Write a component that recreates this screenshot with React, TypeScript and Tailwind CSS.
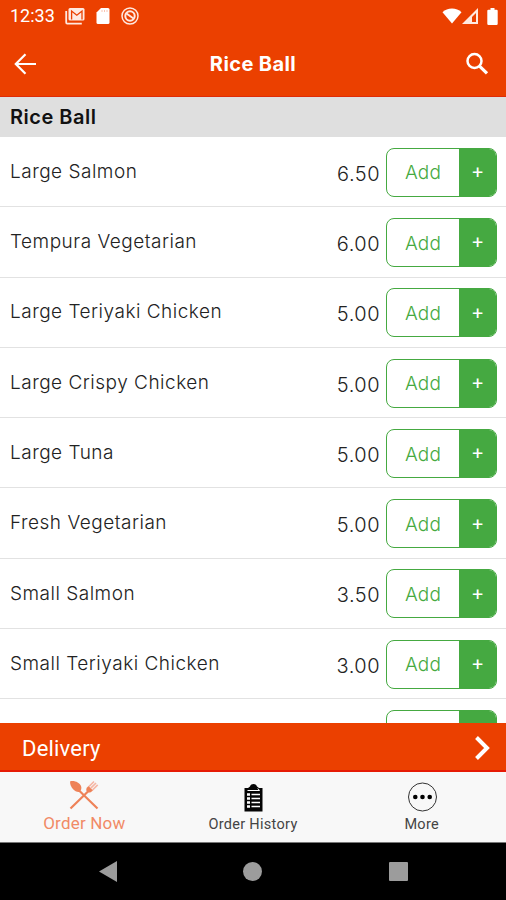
import type { ReactNode } from "react";

type MenuItem = {
  name: string;
  price: string;
};

const items: MenuItem[] = [
  { name: "Large Salmon", price: "6.50" },
  { name: "Tempura Vegetarian", price: "6.00" },
  { name: "Large Teriyaki Chicken", price: "5.00" },
  { name: "Large Crispy Chicken", price: "5.00" },
  { name: "Large Tuna", price: "5.00" },
  { name: "Fresh Vegetarian", price: "5.00" },
  { name: "Small Salmon", price: "3.50" },
  { name: "Small Teriyaki Chicken", price: "3.00" },
];

function StatusBar() {
  return (
    <div className="flex h-8 items-center justify-between pl-2.5 pr-2">
      <div className="flex items-center">
        <span className="w-[55px] font-['Roboto',sans-serif] text-[18px] leading-none">
          12:33
        </span>
        {/* Gmail stack */}
        <svg width="20" height="18" viewBox="0 0 20 18" fill="none">
          <path d="M1.2 4v11.6a1 1 0 0 0 1 1h14.6" stroke="#ffe9e0" strokeWidth="1.8" />
          <rect x="3.5" y="1" width="16" height="12.6" rx="1.5" fill="#ffe9e0" />
          <path d="M6.6 12.5V4l5.2 4.2L17 4v8.5" stroke="#eb4000" strokeWidth="1.3" />
        </svg>
        {/* SD card */}
        <svg width="14" height="16" viewBox="0 0 14 16" className="ml-[11px]">
          <path d="M5 0h7a1.5 1.5 0 0 1 1.5 1.5v13a1.5 1.5 0 0 1-1.5 1.5H2a1.5 1.5 0 0 1-1.5-1.5V4.5z" fill="#fff" />
          <path d="M6 2v2M8.5 2v2M11 2v2" stroke="#f9c4b2" />
        </svg>
        {/* Blocked circle */}
        <svg width="18" height="18" viewBox="0 0 18 18" fill="none" stroke="#ffe9e0" className="ml-[11px]">
          <circle cx="9" cy="9" r="8" strokeWidth="1.5" />
          <circle cx="9" cy="9" r="4.7" strokeWidth="2" />
          <path d="M5.5 6.5l7 5" strokeWidth="2" />
        </svg>
      </div>
      <div className="flex items-center">
        <svg width="20" height="16" viewBox="0 0 20 16" fill="#fff">
          <path d="M10 15.5L.5 4.2C3 1.8 6.3.5 10 .5s7 1.3 9.5 3.7z" />
        </svg>
        <svg width="17" height="16" viewBox="0 0 17 16">
          <path d="M16 0v16H0z" fill="#ffe9e0" />
          <path d="M14 5v9h-4V9z" fill="#eb4000" />
        </svg>
        <svg width="11" height="17" viewBox="0 0 11 17" fill="#fff" className="ml-2">
          <path d="M3.5 0h4v1.7h2A1.2 1.2 0 0 1 10.700 3v12.700a1.200 1.200 0 0 1-1.200 1.200h-8A1.200 1.200 0 0 1 .3 15.700V3a1.200 1.200 0 0 1 1.200-1.300h2z" />
        </svg>
      </div>
    </div>
  );
}

function Header() {
  return (
    <header className="h-[97px] shrink-0 border-b border-[#df2b08] bg-[#eb4000] text-white">
      <StatusBar />
      <div className="flex h-16 items-center justify-between pl-3.5 pr-[17px]">
        <svg width="23" height="22" viewBox="0 0 23 22" fill="none" stroke="#fff" strokeWidth="2.2">
          <path d="M22 11H2M11.5 1.3L1.8 11l9.700 9.700" />
        </svg>
        <h1 className="pl-1 text-[20px] font-bold leading-none tracking-[0.4px]">Rice Ball</h1>
        <svg width="24" height="24" viewBox="0 0 24 24" fill="none" stroke="#fff">
          <circle cx="9.5" cy="9" r="7" strokeWidth="2.5" />
          <path d="M14.5 14.2l7.500 7.200" strokeWidth="3.2" />
        </svg>
      </div>
    </header>
  );
}

function AddButton() {
  return (
    <div className="flex h-[49px] w-[111px] shrink-0 overflow-hidden rounded-[8px] border border-[#45a941]">
      <button className="flex-1 pt-[3px] text-[19px] font-light tracking-[0.2px] text-[#45a941]">Add</button>
      <button className="w-[37px] bg-[#45a941] pb-0.5 text-[20px] text-white">+</button>
    </div>
  );
}

function MenuRow({ item }: { item: MenuItem }) {
  return (
    <li className="flex h-[70.3px] shrink-0 items-center border-b border-[#e2e2e2] pl-2.5 pr-[9px] pt-px text-[19px] text-[#222]">
      <span className="flex-1 font-light tracking-[0.5px]">{item.name}</span>
      <span className="mr-[6px] pt-[3px] text-[20px] font-light tracking-[0.5px]">{item.price}</span>
      <AddButton />
    </li>
  );
}

function Tab({ label, active, children }: { label: string; active?: boolean; children: ReactNode }) {
  return (
    <button className="flex flex-1 flex-col items-center font-['Roboto',sans-serif]">
      <span className="flex h-[50px] items-center">{children}</span>
      {active ? (
        <span className="-mt-[7px] text-[17px] leading-none tracking-[0.2px] text-[#f18a66]">{label}</span>
      ) : (
        <span className="-mt-1 text-[14.5px] leading-none tracking-[0.3px] text-[#444]">{label}</span>
      )}
    </button>
  );
}

function TabBar() {
  return (
    <nav className="flex h-[70px] shrink-0 bg-[#f8f8f8]">
      <Tab label="Order Now" active>
        <svg width="30" height="30" viewBox="0 0 30 30" fill="none" className="-mt-1">
          <path d="M9 9.5L28.5 28.5M19.5 11L1.5 28.5" stroke="#ee8258" strokeWidth="2.2" />
          <path d="M1 1.5C5 0 10.500 2.500 12 6c1 2.500 0 5-2 6C6.500 12.500 1 8 1 1.500z" fill="#ee8258" />
          <path d="M19.5 6l4.500 4.500-2 1.500c-1.500 1-3 .5-4-.5s-1-2.500 0-4z" fill="#ee8258" />
          <path d="M20 6.500l5-5M21.800 8.200l5.200-5.200M23.500 10l5.200-5.200" stroke="#f6b6a4" strokeWidth="1.7" />
        </svg>
      </Tab>
      <Tab label="Order History">
        <svg width="19" height="28" viewBox="0 0 19 28" className="mt-0.5">
          <path d="M.5 4H4l2-1.500C6.500.7 8 0 9.500 0s3 .7 3.500 2.500L15 4h3.500v23.500H.5z" fill="#050505" />
          <path d="M3.500 6.500h12L13.800 4.500" stroke="#fff" fill="none" />
          <path d="M3 10.500h3M3 14.500h3M3 18.500h3M3 22.500h3" stroke="#fff" strokeWidth="2.5" />
          <path d="M7.500 10.500H16M7.500 14.500H16M7.500 18.500H16M7.500 22.500H16" stroke="#fff" strokeWidth="1.5" />
        </svg>
      </Tab>
      <Tab label="More">
        <svg width="30" height="30" viewBox="0 0 30 30">
          <circle cx="15.5" cy="15" r="14" fill="none" stroke="#333" />
          <circle cx="8.3" cy="15" r="2.3" />
          <circle cx="15.5" cy="15" r="2.3" />
          <circle cx="22.7" cy="15" r="2.3" />
        </svg>
      </Tab>
    </nav>
  );
}

function SystemNav() {
  return (
    <div className="flex h-[58px] shrink-0 items-center justify-center gap-[127px] border-t border-[#777] bg-black">
      <svg width="18" height="21" viewBox="0 0 18 21" fill="#9c9c9c" className="-mr-px">
        <path d="M18 0v21L0 10.5z" />
      </svg>
      <div className="size-[19px] rounded-full bg-[#9c9c9c]" />
      <div className="size-[19px] rounded-[1px] bg-[#9c9c9c]" />
    </div>
  );
}

export default function App() {
  return (
    <div className="flex h-[900px] w-[506px] flex-col overflow-hidden bg-white font-['Inter',sans-serif]">
      <Header />
      <h2 className="flex h-10 shrink-0 items-center bg-[#dfdfdf] pl-2.5 text-[20px] font-semibold tracking-[0.5px] text-[#111]">
        Rice Ball
      </h2>
      <ul className="flex min-h-0 flex-1 flex-col overflow-hidden">
        {items.map((item) => (
          <MenuRow key={item.name} item={item} />
        ))}
        {/* Top edge of the next row's button */}
        <li className="flex shrink-0 justify-end pr-[9px] pt-[11px]">
          <div className="flex h-[49px] w-[111px] justify-end overflow-hidden rounded-[8px] border border-[#45a941]">
            <div className="w-[37px] bg-[#45a941]" />
          </div>
        </li>
      </ul>

      {/* Delivery bar */}
      <div className="flex h-[49px] shrink-0 items-center justify-between border-b-2 border-[#e61b05] bg-[#eb4000] pl-[22px] pr-[15px] font-['Roboto',sans-serif] text-[22px] text-white">
        <span className="pt-1 tracking-[0.2px]">Delivery</span>
        <svg width="17" height="26" viewBox="0 0 17 26" fill="none" stroke="#fff" strokeWidth="4" className="mt-0.5">
          <path d="M2.5 2.5L13 13 2.5 23.5" />
        </svg>
      </div>
      <TabBar />
      <SystemNav />
    </div>
  );
}
